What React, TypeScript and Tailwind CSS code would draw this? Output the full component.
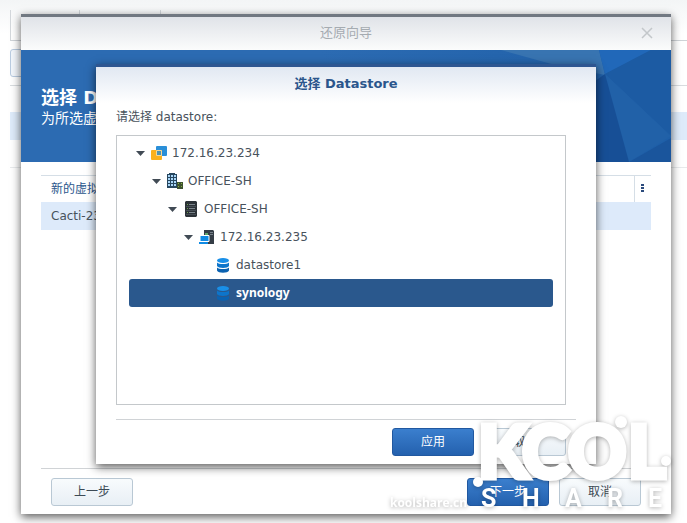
import React from 'react';
import clsx from 'clsx';

const VCenterIcon = () => (
  <svg width="16" height="16" viewBox="0 0 16 16">
    <rect x="5" y="1" width="11" height="10" rx="1" fill="#2a8fd8" />
    <rect x="0" y="5" width="11" height="10" rx="1" fill="#fbb11c" />
    <path d="M5.500 5.500h5v5h-5z" fill="#4f93b0" stroke="#f3d79a" strokeWidth="1" />
  </svg>
);

const DatacenterIcon = () => (
  <svg width="16" height="16" viewBox="0 0 16 16">
    <path d="M2 0h6v1h2v14H0V1h2z" fill="#27475f" />
    <path
      d="M1 2h2v2H1zM4 2h2v2H4zM7 2h2v2H7zM1 5h2v2H1zM4 5h2v2H4zM7 5h2v2H7zM1 8h2v2H1zM4 8h2v2H4zM7 8h2v2H7zM1 11h2v2H1zM4 11h2v2H4zM7 11h2v2H7z"
      fill="#a9d6f8"
    />
    <rect x="10" y="9" width="6" height="7" fill="#3f5130" />
    <path d="M11 10h1v1h-1zM14 10h1v1h-1zM11 13h1v1h-1zM14 13h1v1h-1z" fill="#86b53e" />
  </svg>
);

const ClusterIcon = () => (
  <svg width="16" height="16" viewBox="0 0 16 16">
    <path d="M3 0h10l1 1v14l-1 1H3l-1-1V1z" fill="#2c3237" />
    <path d="M6 3.500h6M6 7.500h6M6 11.500h6" stroke="#7b858c" strokeWidth="1" />
    <path d="M3 5.500h10M3 9.500h10M3 13.500h10" stroke="#454d54" strokeWidth="1" />
    <path d="M4 3.500h1M4 7.500h1M4 11.500h1" stroke="#6ea04e" strokeWidth="1" />
  </svg>
);

const HostIcon = () => (
  <svg width="16" height="16" viewBox="0 0 16 16">
    <path d="M5 1h9l1 1v13H5z" fill="#343d46" />
    <path d="M11 3.500h3M11 5.500h3" stroke="#77818a" strokeWidth="1" />
    <path d="M6 4h3v3H6z" fill="#5fa56b" />
    <path d="M1 6.500h9v6H1z" fill="#108be4" stroke="#fff" strokeWidth="1" />
    <path d="M0 14h9" stroke="#108be4" strokeWidth="2" />
  </svg>
);

const DatastoreIcon = () => (
  <svg width="16" height="16" viewBox="0 0 16 16">
    <path d="M2 10.500c2 2 10 2 12 0v3c-1 3-11 3-12 0z" fill="#0b62b1" />
    <path d="M2 5.500c2 2 10 2 12 0V9c-1 2.500-11 2.500-12 0z" fill="#0d75cb" />
    <ellipse cx="8" cy="3.500" rx="6" ry="2.600" fill="#198fe8" />
  </svg>
);

const nodes = [
  { name: '172.16.23.234', icon: VCenterIcon, indent: 'pl-[3px]', open: true },
  { name: 'OFFICE-SH', icon: DatacenterIcon, indent: 'pl-[19px]', open: true },
  { name: 'OFFICE-SH', icon: ClusterIcon, indent: 'pl-[35px]', open: true },
  { name: '172.16.23.235', icon: HostIcon, indent: 'pl-[51px]', open: true },
  { name: 'datastore1', icon: DatastoreIcon, indent: 'pl-[67px]' },
  { name: 'synology', icon: DatastoreIcon, indent: 'pl-[67px]', selected: true },
];

const Button = ({ primary, children }: { primary?: boolean; children: React.ReactNode }) => (
  <button
    type="button"
    className={clsx(
      'h-7 w-[82px] rounded-[3px] border text-[12px] leading-none',
      primary
        ? 'border-[#2158a0] bg-linear-to-b from-[#3b7fce] to-[#2461ae] text-white'
        : 'border-[#b9c8d4] bg-linear-to-b from-[#f8fbfd] to-[#e8eff5] text-[#3c4a55]'
    )}
  >
    {children}
  </button>
);

// Task list that stays visible around the edges of the wizard
const Backdrop = () => (
  <div className="bg-linear-to-b from-[#f3f5f6] to-white to-20% pl-2.5">
    <div className="flex h-10 pt-2.5">
      <div className="w-[69px] border-l border-[#d3d7db]" />
      <div className="w-[81px] border-l border-[#d3d7db]" />
      <div className="border-l border-[#d3d7db]" />
    </div>
    <div className="h-[45px] border-t border-[#cfd3d7] pt-2">
      <div className="h-7 w-20 rounded-[3px] border border-[#b9cbe0] bg-[#f3f7fc]" />
    </div>
    <div className="h-[27px] border-t border-[#d8dcdf]" />
    <div className="h-7 bg-[#deebfa]" />
    <div className="h-7 border-b border-[#e8eaec]" />
  </div>
);

const Banner = () => (
  <div className="relative h-28 shrink-0 overflow-hidden bg-[#2c6bb2] pl-5 pt-9 text-white">
    <svg className="absolute right-0 top-0" width="350" height="112" viewBox="0 0 350 112">
      <defs>
        <linearGradient id="fade" x1="0" x2="1">
          <stop offset="0" stopColor="#2c6bb2" />
          <stop offset="1" stopColor="#1e5fa8" />
        </linearGradient>
      </defs>
      <rect width="350" height="112" fill="url(#fade)" />
      <path d="M180 0h98l6 25-50-10z" fill="#3874b1" />
      <path d="M278 0h52l-46 24z" fill="#2168b9" />
      <path d="M330 0h20v86l-66-62z" fill="#1c5ba3" />
      <path d="M284 24l66 62-42 26z" fill="#2161a8" />
      <path d="M284 24l24 88h-38V34z" fill="#174f96" />
      <path d="M308 112l42-24v24z" fill="#1a559c" />
    </svg>
    <h1 className="relative text-[18px] font-bold leading-6">选择 Datastore</h1>
    <p className="relative text-[14px] leading-4">为所选虚拟机</p>
  </div>
);

const DatastoreDialog = () => (
  <section
    role="dialog"
    aria-label="选择 Datastore"
    className="absolute inset-x-[75px] bottom-[50px] top-[47px] flex flex-col border-t-[3px] border-[#2e5691] bg-white shadow-[0_3px_9px_rgba(0,0,0,0.65)]"
  >
    <h2 className="h-9 shrink-0 bg-linear-to-b from-[#e1e8f2] to-white text-center text-[13px] font-bold leading-[34px] text-[#2b568c]">
      选择 Datastore
    </h2>
    <div className="flex flex-1 flex-col px-5">
      <p className="h-8 text-[12px] leading-7 text-[#48525c]">请选择 datastore:</p>
      <ul role="tree" className="mr-2.5 h-[270px] border border-[#c4c8cb] px-3 py-[3px]">
        {nodes.map((node, i) => (
          <li
            key={i}
            role="treeitem"
            aria-selected={!!node.selected}
            className={clsx(
              'flex h-7 items-center rounded-[3px] text-[12px]',
              node.indent,
              node.selected ? 'bg-[#2a588d] font-["Noto_Sans"] font-bold text-white' : 'text-[#48525c]'
            )}
          >
            <span className="flex w-4 justify-center">
              {node.open && (
                <svg width="9" height="5" viewBox="0 0 9 5">
                  <path d="M0 0h9L4.500 5z" fill="#414b55" />
                </svg>
              )}
            </span>
            <span className="ml-[3px] mr-[5px]">
              <node.icon />
            </span>
            {node.name}
          </li>
        ))}
      </ul>
      <div className="mt-3.5 flex justify-end gap-2.5 border-t border-[#d0d3d6] pr-2.5 pt-2">
        <Button primary>应用</Button>
        <Button>取消</Button>
      </div>
    </div>
  </section>
);

const Watermark = () => (
  <svg
    className="pointer-events-none absolute bottom-0 right-0 drop-shadow-[0_1px_2px_rgba(0,0,0,0.3)]"
    width="307"
    height="123"
    viewBox="0 0 307 123"
    fill="#fff"
  >
    <g fontFamily="Lato" fontWeight="900" fontSize="72" stroke="#fff" strokeWidth="5">
      <text x="98" y="78">K</text>
      <text x="142" y="78">C</text>
      <text x="188" y="78">O</text>
      <text x="248" y="78">L</text>
    </g>
    <circle cx="98" cy="82" r="5" />
    <circle cx="241" cy="22" r="6" />
    <circle cx="286" cy="61" r="5" />
    <g fontFamily="Roboto" fontWeight="700" fontSize="25">
      <text x="101" y="107">S</text>
      <text x="142" y="107">H</text>
      <text x="185" y="107">A</text>
      <text x="227" y="107">R</text>
      <text x="268" y="107">E</text>
    </g>
    <text x="10" y="107" fontFamily="Open Sans" fontWeight="700" fontSize="12">koolshare.cn</text>
  </svg>
);

export default function App() {
  return (
    <div className='relative h-screen overflow-hidden bg-white font-["DejaVu_Sans","Noto_Sans_CJK_SC",sans-serif]'>
      <Backdrop />
      <div className="absolute inset-0 flex pb-[9px] pl-[21px] pr-4 pt-3.5">
        <section
          role="dialog"
          aria-label="还原向导"
          className="relative flex flex-1 flex-col border-t-[3px] border-[#717881] bg-white shadow-[0_3px_9px_rgba(0,0,0,0.65)]"
        >
          <header className="relative h-[33px] shrink-0 bg-linear-to-b from-[#e0e3e8] to-[#fbfcfc] text-center text-[13px] leading-8 text-[#a5abb1]">
            还原向导
            <button type="button" aria-label="关闭" className="absolute right-[18px] top-2.5">
              <svg width="12" height="12" viewBox="0 0 12 12" stroke="#c3c7ca" strokeWidth="1.500">
                <path d="M1 1l10 10M11 1L1 11" />
              </svg>
            </button>
          </header>
          <Banner />
          <div className="flex-1 px-5 pt-[13px]">
            <table className="w-full border-t border-[#d5dee6] text-left text-[12px]">
              <thead>
                <tr className="h-[26px] text-[#2b568c]">
                  <th className="pl-2.5 font-normal">新的虚拟机</th>
                  <th className="w-[17px] border-l border-[#d5dee6]">
                    <svg className="mx-auto" width="3" height="9" viewBox="0 0 3 9" fill="#2b4a7c">
                      <path d="M0 0h3v2H0zM0 3h3v2H0zM0 6h3v2H0z" />
                    </svg>
                  </th>
                </tr>
              </thead>
              <tbody>
                <tr className="h-7 bg-[#ddeafa] text-[#48525c]">
                  <td colSpan={2} className="pl-2.5">Cacti-23</td>
                </tr>
              </tbody>
            </table>
          </div>
          <footer className="mx-5 flex gap-2.5 border-t border-[#d0d3d6] px-2.5 pb-2 pt-[9px]">
            <Button>上一步</Button>
            <div className="flex-1" />
            <Button primary>下一步</Button>
            <Button>取消</Button>
          </footer>
          <DatastoreDialog />
        </section>
      </div>
      <Watermark />
    </div>
  );
}
